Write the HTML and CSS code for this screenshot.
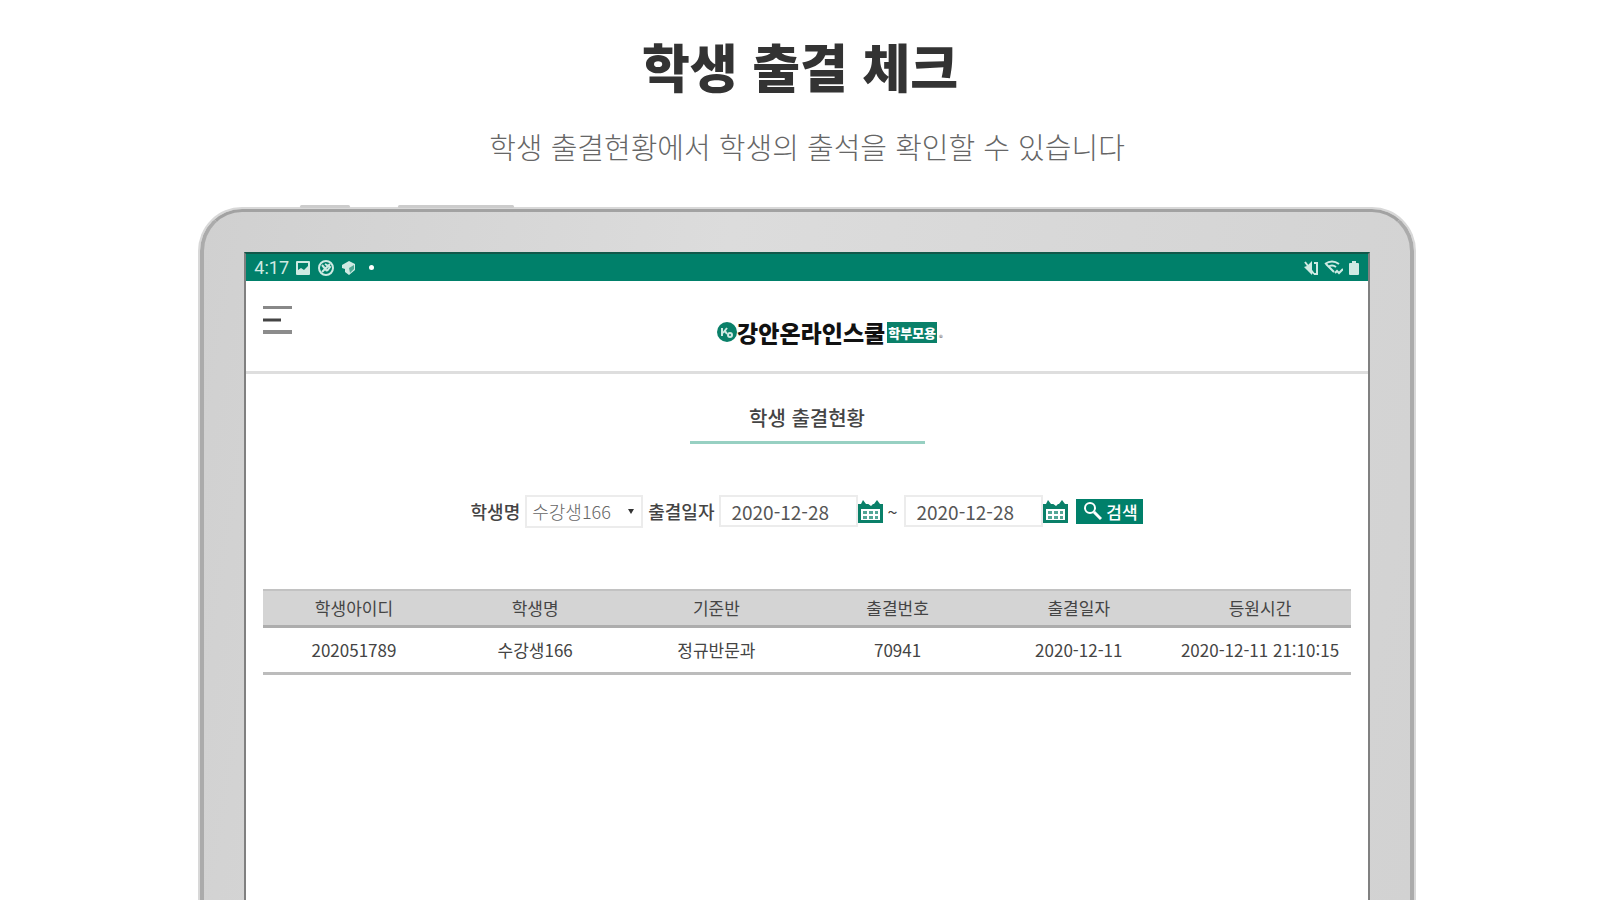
FILE: index.html
```html
<!DOCTYPE html>
<html lang="ko">
<head>
    <meta charset="UTF-8">
    <meta name="viewport" content="width=device-width, initial-scale=1.0">
    <title>학생 출결 체크</title>
    <link rel="stylesheet" href="styles.css">
</head>
<body>
    <h1 class="headline">학생 출결 체크</h1>
    <div class="stage">
        <p class="subline">학생 출결현황에서 학생의 출석을 확인할 수 있습니다</p>
        <div class="tablet">
            <span class="side-key power"></span>
            <span class="side-key volume"></span>
            <div class="screen">
                <div class="status-bar">
                    <span class="time">4:17</span>
                    <svg width="16" height="16" viewBox="0 0 16 16"><path fill-rule="evenodd" d="M2 1h12a1 1 0 0 1 1 1v12a1 1 0 0 1-1 1H2a1 1 0 0 1-1-1V2a1 1 0 0 1 1-1zm1 2v7l3-2 3 2 4-4V3z"/></svg>
                    <svg width="18" height="18" viewBox="0 0 18 18"><g fill="none" stroke="currentColor" stroke-width="2"><circle cx="9" cy="9" r="7"/><path d="M5 6l5 6M13 5l-8 8M8 5l5 3-3 4"/></g></svg>
                    <svg width="16" height="16" viewBox="0 0 16 16"><path d="M1 5l7-4 6 3v6l-6 5-4-3V9L1 8z"/><path d="M8 8l5-3v4l-4 4z" fill="#4fa995"/></svg>
                    <span class="dot"></span>
                    <div class="status-right">
                        <svg width="16" height="16" viewBox="0 0 16 16"><path d="M1 7l3-1 5-5v14l-5-5z"/><path d="M2 2l9 12M11 3h3v11h-3" fill="none" stroke="currentColor" stroke-width="2"/></svg>
                        <svg width="19" height="16" viewBox="0 0 19 16"><g fill="none" stroke="currentColor" stroke-width="2"><path d="M1 4q7-5 14 0M4 7q4-3 8 0M2 4l8 8"/><path d="M11 13l2-2 2 2 4-4"/></g></svg>
                        <svg width="12" height="16" viewBox="0 0 12 16"><path d="M4 1h4v2h2a1 1 0 0 1 1 1v10a1 1 0 0 1-1 1H2a1 1 0 0 1-1-1V4a1 1 0 0 1 1-1h2z"/></svg>
                    </div>
                </div>
                <header class="header">
                    <button type="button" class="menu" aria-label="메뉴">
                        <svg width="29" height="30" viewBox="0 0 29 30"><path d="M0 2.5h29" stroke="#888" stroke-width="3"/><path d="M0 15h18" stroke="#444" stroke-width="3"/><path d="M0 27h29" stroke="#8c8c8c" stroke-width="4"/></svg>
                    </button>
                    <a href="#" class="logo">
                        <svg width="20" height="20" viewBox="0 0 20 20"><circle cx="10" cy="10" r="10" fill="#0a8069"/><path d="M5 6v8M6 11l4-5M8 9l2 3" fill="none" stroke="#cfe9e2" stroke-width="2"/><circle cx="13" cy="13" r="2" fill="none" stroke="#cfe9e2" stroke-width="2"/></svg>
                        <span class="brand">강안온라인스쿨</span>
                        <span class="badge">학부모용</span>
                        <span class="reg">®</span>
                    </a>
                </header>
                <main class="content">
                    <h2 class="page-title">학생 출결현황</h2>
                    <form class="search">
                        <label for="student">학생명</label>
                        <span class="select-wrap">
                            <select id="student">
                                <option>수강생166</option>
                            </select>
                        </span>
                        <label for="from">출결일자</label>
                        <input type="text" id="from" value="2020-12-28">
                        <button type="button" class="calendar" aria-label="시작일 선택">
                            <svg width="25" height="24" viewBox="0 0 25 24"><path fill="#0a8069" d="M0 5h3l2-4 3 4h8l3-4 3 4h3v19H0z"/><path fill="#fff" d="M9 1l3 4 4-4v3l-3 3-4-3zM3 10h19v11H3z"/><path fill="#0a8069" d="M5 12h4v3H5zM11 12h4v3h-4zM17 12h3v3h-3zM5 17h4v3H5zM11 17h4v3h-4zM17 17h3v3h-3z" opacity=".7"/></svg>
                        </button>
                        <span class="tilde">~</span>
                        <input type="text" id="to" value="2020-12-28" aria-label="종료일">
                        <button type="button" class="calendar" aria-label="종료일 선택">
                            <svg width="25" height="24" viewBox="0 0 25 24"><path fill="#0a8069" d="M0 5h3l2-4 3 4h8l3-4 3 4h3v19H0z"/><path fill="#fff" d="M9 1l3 4 4-4v3l-3 3-4-3zM3 10h19v11H3z"/><path fill="#0a8069" d="M5 12h4v3H5zM11 12h4v3h-4zM17 12h3v3h-3zM5 17h4v3H5zM11 17h4v3h-4zM17 17h3v3h-3z" opacity=".7"/></svg>
                        </button>
                        <button type="submit" class="btn">
                            <svg width="20" height="20" viewBox="0 0 20 20"><g fill="none" stroke="currentColor"><circle cx="8" cy="7" r="5" stroke-width="2"/><path d="M12 11l7 7" stroke-width="3"/></g></svg>
                            <span>검색</span>
                        </button>
                    </form>
                    <table class="list">
                        <thead>
                            <tr>
                                <th>학생아이디</th>
                                <th>학생명</th>
                                <th>기준반</th>
                                <th>출결번호</th>
                                <th>출결일자</th>
                                <th>등원시간</th>
                            </tr>
                        </thead>
                        <tbody>
                            <tr>
                                <td>202051789</td>
                                <td>수강생166</td>
                                <td>정규반문과</td>
                                <td>70941</td>
                                <td>2020-12-11</td>
                                <td>2020-12-11 21:10:15</td>
                            </tr>
                        </tbody>
                    </table>
                </main>
            </div>
        </div>
    </div>
</body>
</html>
```
FILE: styles.css
```css
* {
    box-sizing: border-box;
}
body {
    margin: 0;
    height: 100vh;
    overflow: hidden;
    display: flex;
    flex-direction: column;
    background-color: #fff;
    color: #444;
    font-family: "Noto Sans CJK KR", sans-serif;
}
.headline {
    margin: 0;
    padding-top: 32px;
    font-size: 52px;
    line-height: 68px;
    font-weight: 900;
    text-align: center;
    color: #333;
}
.stage {
    flex: 1;
    display: flex;
    flex-direction: column;
    align-items: center;
    padding-left: 14px;
}
.subline {
    margin: 25px 0 42px;
    font-size: 29px;
    line-height: 42px;
    font-weight: 300;
    color: #666;
}
.tablet {
    position: relative;
    flex: 1;
    display: flex;
    width: 76.5%;
    padding: 40px 40px 0;
    background: linear-gradient(100deg, #d0d0d0, #dcdcdc 40%, #d2d2d2);
    border: 4px solid #ababab;
    border-top: 3px solid #a2a2a2;
    border-bottom: 0;
    border-radius: 42px 42px 0 0;
    box-shadow: 0 0 0 2px #d8d8d8;
}
.side-key {
    position: absolute;
    top: -7px;
    height: 3px;
    border-radius: 2px;
    background-color: #ccc;
}
.power {
    left: 96px;
    width: 50px;
}
.volume {
    left: 194px;
    width: 116px;
}
.screen {
    flex: 1;
    background-color: #fff;
    border: 2px solid #808080;
    border-top-color: #12584a;
    border-bottom: 0;
}
.status-bar {
    display: flex;
    align-items: center;
    gap: 6px;
    height: 27px;
    padding: 0 8px;
    background-color: #00806a;
    color: #cfeae3;
}
.status-bar svg {
    fill: currentColor;
}
.time {
    font-family: Roboto, sans-serif;
    font-size: 18px;
}
.dot {
    width: 5px;
    height: 5px;
    margin-left: 6px;
    border-radius: 50%;
    background-color: #fff;
}
.status-right {
    display: flex;
    gap: 5px;
    margin-left: auto;
}
.header {
    display: flex;
    align-items: center;
    height: 93px;
    padding-left: 17px;
    border-bottom: 3px solid #dedede;
}
.menu,
.calendar {
    display: flex;
    padding: 0;
    border: 0;
    background: none;
    cursor: pointer;
}
.menu {
    margin-bottom: 12px;
}
.logo {
    flex: 1;
    display: flex;
    justify-content: center;
    align-items: center;
    padding-top: 12px;
    color: #111;
    text-decoration: none;
}
.brand {
    font-size: 23px;
    line-height: 24px;
    font-weight: 900;
}
.badge {
    margin-left: 2px;
    padding: 0 1px;
    background-color: #0a8069;
    color: #fff;
    font-size: 13px;
    line-height: 21px;
    font-weight: 900;
}
.reg {
    align-self: flex-end;
    margin-left: 2px;
    font-size: 8px;
    line-height: 12px;
    color: #666;
}
.content {
    padding: 28px 17px 0;
}
.page-title {
    width: 235px;
    margin: 0 auto 49px;
    padding-bottom: 7px;
    border-bottom: 3px solid #97d0c2;
    font-size: 20px;
    line-height: 32px;
    font-weight: 500;
    text-align: center;
}
.search {
    display: flex;
    justify-content: center;
    align-items: center;
    height: 36px;
    margin-bottom: 60px;
    font-size: 18px;
}
.search label {
    font-weight: 500;
}
.search input,
.search select {
    font-family: inherit;
    background-color: #fff;
    border: 2px solid #ececec;
}
.search input {
    width: 139px;
    height: 32px;
    margin-left: 5px;
    padding: 0 10px;
    font-size: 19px;
    color: #555;
}
.select-wrap {
    position: relative;
    margin: 0 5px;
}
.select-wrap::after {
    content: "";
    position: absolute;
    right: 9px;
    top: 14px;
    border: 3px solid transparent;
    border-top: 5px solid #333;
    border-bottom: 0;
}
.search select {
    display: block;
    width: 118px;
    height: 33px;
    padding: 0 5px;
    appearance: none;
    font-size: 18px;
    font-weight: 300;
    color: #666;
}
.tilde {
    margin: 0 2px 0 4px;
}
.btn {
    display: flex;
    align-items: center;
    justify-content: center;
    gap: 4px;
    width: 67px;
    height: 25px;
    margin-left: 8px;
    padding: 0;
    border: 0;
    background-color: #00806a;
    color: #fff;
    font-family: inherit;
    font-size: 17px;
    font-weight: 500;
    line-height: 25px;
    cursor: pointer;
}
.list {
    width: 100%;
    table-layout: fixed;
    border-collapse: collapse;
    font-size: 17px;
    line-height: 24px;
    text-align: center;
    white-space: nowrap;
}
.list th {
    padding: 5px 0;
    background-color: #d4d4d4;
    border-top: 2px solid #c2c2c2;
    border-bottom: 3px solid #adadad;
    font-weight: 400;
}
.list td {
    padding: 10px 0;
    border-bottom: 3px solid #bcbcbc;
}
```
